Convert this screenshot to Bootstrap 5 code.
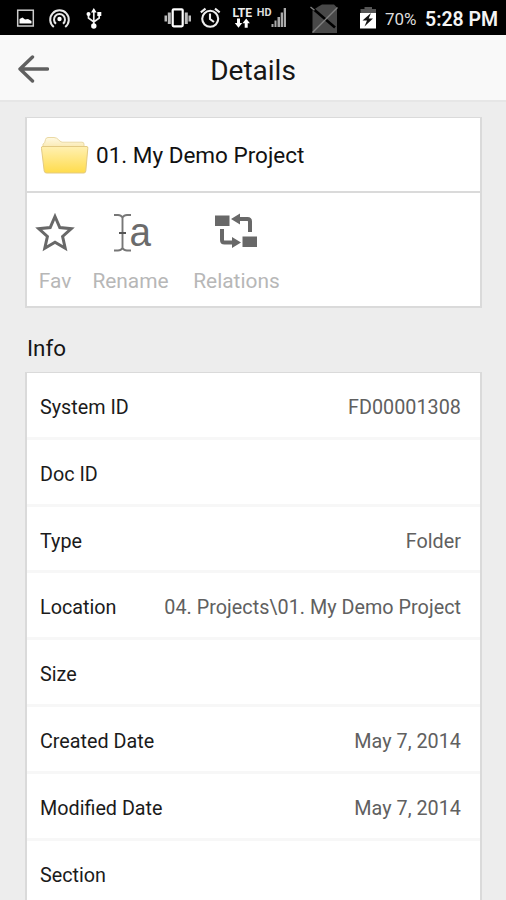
<!DOCTYPE html>
<html lang="en">
<head>
<meta charset="utf-8">
<meta name="viewport" content="width=device-width, initial-scale=1">
<title>Details</title>
<link rel="stylesheet" href="https://cdn.jsdelivr.net/npm/bootstrap@5.3.0/dist/css/bootstrap.min.css">
<style>
body { background: #ededed; font-family: Roboto, "Noto Sans", sans-serif; color: #161616; height: 900px; overflow: hidden; }
svg { display: block; flex: none; }
.status-bar { height: 35px; background: #000; color: #eee; }
.status-bar svg { height: 35px; }
.battery-text { width: 40px; font-size: 17px; line-height: 38px; color: #ddd; }
.clock { font-size: 19.500px; font-weight: 600; line-height: 39px; color: #f4f4f4; white-space: nowrap; }
.title-bar { height: 67px; background: #f9f9f9; border-bottom: 2px solid #e6e6e6; }
.title-bar svg { margin-left: 17px; }
.title-bar h1 { font-size: 28px; font-weight: 400; line-height: 34px; padding-top: 6px; margin-right: 49px; }
.panel { margin: 0 24px 0 25px; border: 2px solid #dadada; border-top-width: 1px; border-radius: 0; }
.summary { margin-top: 15px; height: 191px; }
.file-row { height: 76px; border-bottom: 2px solid #dadada; padding-left: 13px; }
.file-name { font-size: 22.5px; color: #111; margin-left: 7px; padding-top: 3px; }
.action { height: 113px; padding-top: 18px; color: #b7b7b7; font-size: 20.9px; line-height: 30px; }
.action span { margin-top: 11px; }
.action-fav { width: 56px; }
.action-rename { width: 95px; }
.action-relations { width: 117px; }
.action-rename svg { margin-left: 5px; }
.action-relations svg { margin-right: 2px; }
.info-heading { font-size: 22.4px; font-weight: 400; line-height: 30px; margin: 25px 0 9px 27px; }
.info-row { height: 66.8px; border: 0; border-bottom: 3px solid #f7f7f7; padding: 6px 19px 0 13px; font-size: 19.75px; color: #1b1b1b; border-radius: 0 !important; background: #fff; }
.info-value { color: #606060; letter-spacing: .03px; }
</style>
<script src="https://cdn.jsdelivr.net/npm/bootstrap@5.3.0/dist/js/bootstrap.bundle.min.js"></script>
</head>
<body>
<header>
  <div class="status-bar d-flex">
    <svg width="42" viewBox="0 0 42 35"><rect x="17.7" y="10.2" width="15.6" height="15.8" fill="none" stroke="#ccc" stroke-width="1.5"/><path d="M19.500 23.500v-4.500l3-1.500 2.500 2 3-.5 3.500 2v2.500z" fill="#fff"/></svg>
    <svg width="36" viewBox="42 0 36 35" fill="none" stroke="#e8e8e8" stroke-width="2"><path d="M53.800 27A9.300 9.300 0 1 1 65.200 27"/><path d="M56 23.800A5.500 5.500 0 1 1 63 23.800"/><circle cx="59.500" cy="19" r="2.200" fill="#fff" stroke="none"/></svg>
    <svg width="80" viewBox="78 0 80 35" fill="none" stroke="#eee" stroke-width="1.700"><path d="M93.800 10v16M88.500 14.500v3.500l5.300 4 5.400-4v-3.500"/><g fill="#fff" stroke="none"><path d="M91 12.500l2.800-4.500 2.800 4.500zM97.300 12h4v4h-4z"/><circle cx="88.500" cy="14" r="2"/><circle cx="93.800" cy="26" r="2.700"/></g></svg>
    <svg width="38" viewBox="158 0 38 35"><rect x="172.700" y="9.300" width="10" height="17" rx="1" fill="none" stroke="#fff" stroke-width="2.200"/><path d="M167.800 12.500h3v11.500h-3zM184.800 12.500h3v11.500h-3zM164.500 15.500h2.500v6h-2.500zM188.500 15.500h2.500v6h-2.500z" fill="#bbb"/></svg>
    <svg width="33" viewBox="196 0 33 35" fill="none" stroke="#eee" stroke-width="2.100"><circle cx="210.200" cy="18.800" r="8"/><path d="M210 13.500v5.500l4 3M200.800 12.300l4.700-3.700M219.700 12.300l-4.700-3.700"/></svg>
    <svg width="26" viewBox="229 0 26 35"><text x="232.500" y="16.500" font-size="12" font-weight="700" textLength="19.500" lengthAdjust="spacingAndGlyphs" fill="#eee">LTE</text><path d="M237 18.500v4.500h-2.200l3.700 4.700 3.700-4.700H240v-4.500zM244.700 27.700v-4.500h-2.200l3.700-4.700 3.700 4.700h-2.200v4.500z" fill="#fff"/></svg>
    <svg width="49" viewBox="255 0 49 35"><text x="256.700" y="16" font-size="10.500" font-weight="700" textLength="14.800" lengthAdjust="spacingAndGlyphs" fill="#ddd">HD</text><path d="M271.500 24h2v3h-2zM274.500 20.500h2v6.500h-2zM277.500 17h2.500v10h-2.500zM280.700 12.500h2.300v14.500h-2.300zM283.700 8h2.300v19h-2.300z" fill="#aaa"/></svg>
    <svg width="50" viewBox="304 0 50 35"><path d="M312.500 10.500l6-4 3.500-2h12l3 3v25.500h-24.500z" fill="#484848"/><path d="M314 9.500l21 18" stroke="#000" stroke-width="2.600"/><path d="M310.500 7l4 3.300M337.500 7.500l-25 25" stroke="#808080" stroke-width="1.400"/></svg>
    <svg width="31" viewBox="354 0 31 35"><path d="M360.500 13.500v-4.500h4v-2h7.500v2h4v4.500z" fill="#555"/><path d="M360 13h16v15.500h-16z" fill="#fff"/><path d="M371 13l-8.500 7.500h4.500l-2.500 6 8.500-8h-4.300z" fill="#111"/></svg>
    <span class="battery-text">70%</span>
    <span class="clock">5:28 PM</span>
  </div>
  <div class="title-bar d-flex align-items-center">
    <svg width="32" height="30" viewBox="0 0 32 30" fill="none" stroke="#606060" stroke-width="3.400" stroke-linecap="round" stroke-linejoin="round"><path d="M15.500 4L3 16l12.500 12M3 16h27.500"/></svg>
    <h1 class="flex-grow-1 text-center mb-0">Details</h1>
  </div>
</header>
<main>
  <section class="panel summary card">
    <div class="file-row d-flex align-items-center">
      <svg width="49" height="40" viewBox="0 0 49 40">
        <defs>
          <linearGradient id="front" x1="0" y1="0" x2="0" y2="1"><stop offset="0" stop-color="#fff0b2"/><stop offset="1" stop-color="#ffdc4c"/></linearGradient>
          <linearGradient id="back" x1="0" y1="0" x2="0" y2="1"><stop offset="0" stop-color="#fff9e2"/><stop offset="1" stop-color="#f8e5a4"/></linearGradient>
        </defs>
        <path d="M3 15V9q2 0 2.500-4.500Q6 2.500 8 2.500h6c4 0 5 4 8 4.700h20q2 0 2 2v6z" fill="url(#back)" stroke="#ead9a4"/>
        <path d="M2 11.500h45q1 0 .8 2l-2 22.500q-.2 2-2 2H6.500q-2 0-2.300-2L1.500 13.500q-.2-2 .5-2z" fill="url(#front)" stroke="#e3ca83"/>
      </svg>
      <span class="file-name">01. My Demo Project</span>
    </div>
    <div class="d-flex">
      <div class="action action-fav d-flex flex-column align-items-center">
        <svg width="40" height="44" viewBox="0 0 40 44"><path d="M20 5.500l4.800 11 11.500 1.200-8.700 7.800 2.600 11.700L20 31.200l-10.200 6 2.600-11.700-8.700-7.800 11.500-1.200z" fill="none" stroke="#686868" stroke-width="3"/></svg>
        <span>Fav</span>
      </div>
      <div class="action action-rename d-flex flex-column align-items-center">
        <svg width="44" height="44" viewBox="0 0 44 44"><path d="M3 4h4q3 0 4.500 2.500Q13 4 16 4h4M3 39.500h4q3 0 4.500-2.500 1.500 2.500 4.500 2.500h4M11.500 6v32" fill="none" stroke="#777" stroke-width="1.900"/><path d="M8 22h7" stroke="#555" stroke-width="2"/><text x="18.500" y="35" font-size="40" textLength="21.500" lengthAdjust="spacingAndGlyphs" fill="#6b6b6b" font-family="Liberation Sans, sans-serif">a</text></svg>
        <span>Rename</span>
      </div>
      <div class="action action-relations d-flex flex-column align-items-center">
        <svg width="44" height="44" viewBox="0 0 44 44"><path d="M1 4.500h14.500V15H1zM28.500 25.500H43V36H28.500z" fill="#686868"/><path d="M25 8h8.500q2.500 0 2.500 2.500v10.500M8 18v11q0 2.500 2.500 2.500H19" fill="none" stroke="#686868" stroke-width="4"/><path d="M17 8l9-5.500v11zM27 31.500l-9-5.500v11z" fill="#686868"/></svg>
        <span>Relations</span>
      </div>
    </div>
  </section>
  <h2 class="info-heading">Info</h2>
  <section class="panel list-group">
    <div class="info-row list-group-item d-flex justify-content-between align-items-center"><span>System ID</span><span class="info-value">FD00001308</span></div>
    <div class="info-row list-group-item d-flex justify-content-between align-items-center"><span>Doc ID</span></div>
    <div class="info-row list-group-item d-flex justify-content-between align-items-center"><span>Type</span><span class="info-value">Folder</span></div>
    <div class="info-row list-group-item d-flex justify-content-between align-items-center"><span>Location</span><span class="info-value">04. Projects\01. My Demo Project</span></div>
    <div class="info-row list-group-item d-flex justify-content-between align-items-center"><span>Size</span></div>
    <div class="info-row list-group-item d-flex justify-content-between align-items-center"><span>Created Date</span><span class="info-value">May 7, 2014</span></div>
    <div class="info-row list-group-item d-flex justify-content-between align-items-center"><span>Modified Date</span><span class="info-value">May 7, 2014</span></div>
    <div class="info-row list-group-item d-flex justify-content-between align-items-center"><span>Section</span></div>
  </section>
</main>
</body>
</html>
